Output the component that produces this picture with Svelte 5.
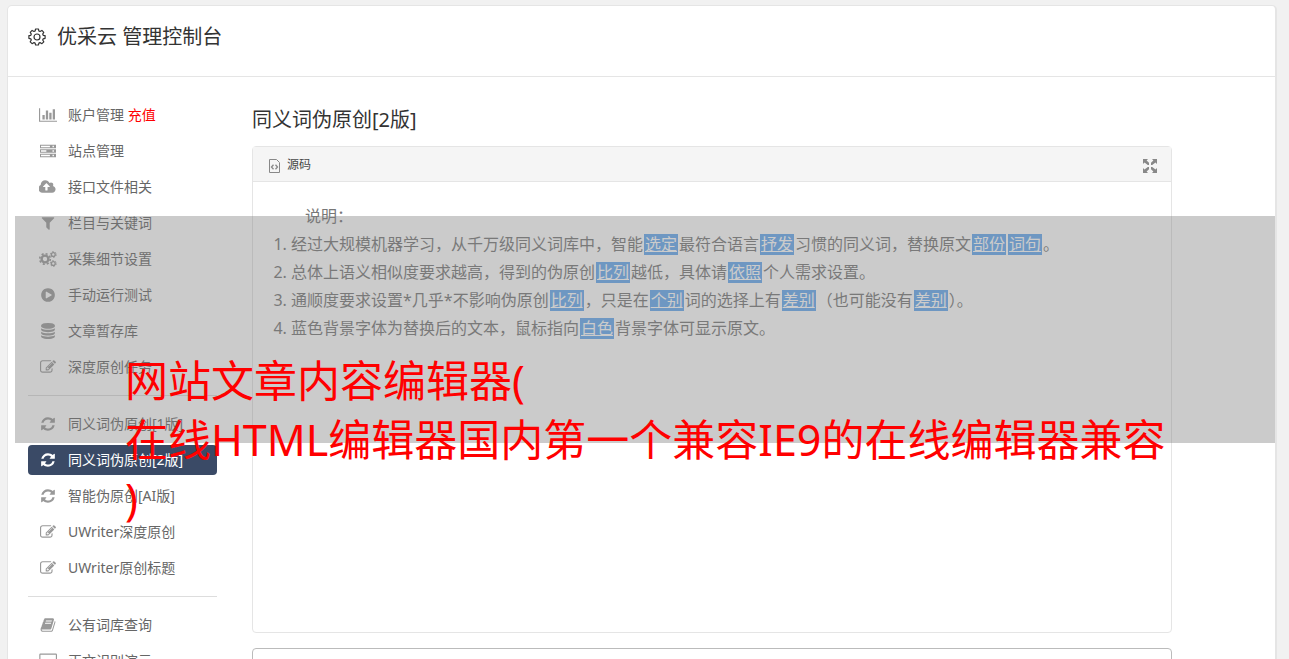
<script>
  const icons = {
    chart: {
      w: 2048,
      d: 'M640 896v512h-256v-512h256zm384-512v1024h-256v-1024h256zm1024 1152v128h-2048v-1536h128v1408h1920zm-640-896v768h-256v-768h256zm384-384v1152h-256v-1152h256z',
    },
    server: {
      w: 1792,
      d: 'M0 192h1792v384h-1792zM112 304v160h1000v-160zM1400 304v160h160v-160zM0 704h1792v384h-1792zM112 816v160h600v-160zM1400 816v160h160v-160zM0 1216h1792v384h-1792zM112 1328v160h1000v-160zM1400 1328v160h160v-160z',
    },
    upload: {
      w: 1920,
      d: 'M1216 864q0-14-9-23l-352-352q-9-9-23-9t-23 9l-351 351q-10 12-10 24 0 14 9 23t23 9h224v352q0 13 9.5 22.5t22.5 9.5h192q13 0 22.5-9.5t9.5-22.5v-352h224q13 0 22.5-9.5t9.5-22.5zm640 288q0 159-112.5 271.5t-271.5 112.5h-1088q-185 0-316.5-131.5t-131.5-316.5q0-130 70-240t188-165q-2-30-2-43 0-212 150-362t362-150q156 0 285.5 87t188.5 231q71-62 166-62 106 0 181 75t75 181q0 76-41 138 130 31 213.5 135.5t83.5 238.5z',
    },
    filter: {
      w: 1792,
      d: 'M1595 295q17 41-14 70l-493 493v742q0 42-39 59-13 5-25 5-27 0-45-19l-256-256q-19-19-19-45v-486l-493-493q-31-29-14-70 17-39 59-39h1280q42 0 59 39z',
    },
    play: {
      w: 1792,
      d: 'M896 128q209 0 385.5 103t279.5 279.5 103 385.5-103 385.5-279.5 279.5-385.5 103-385.5-103-279.5-279.5-103-385.5 103-385.5 279.5-279.5 385.5-103zm384 823q32-18 32-55t-32-55l-544-320q-31-19-64-1-32 19-32 56v640q0 37 32 56 16 8 32 8 17 0 32-9z',
    },
    database: {
      w: 1792,
      d: 'M896 768q237 0 443-43t325-127v170q0 69-103 128t-280 93.5-385 34.5-385-34.5-280-93.5-103-128v-170q119 84 325 127t443 43zm0 768q237 0 443-43t325-127v170q0 69-103 128t-280 93.5-385 34.5-385-34.5-280-93.5-103-128v-170q119 84 325 127t443 43zm0-384q237 0 443-43t325-127v170q0 69-103 128t-280 93.5-385 34.5-385-34.5-280-93.5-103-128v-170q119 84 325 127t443 43zm0-1152q208 0 385 34.5t280 93.5 103 128v128q0 69-103 128t-280 93.5-385 34.5-385-34.5-280-93.5-103-128v-128q0-69 103-128t280-93.5 385-34.5z',
    },
    edit: {
      w: 1792,
      d: 'M888 1184l116-116-152-152-116 116v56h96v96h56zm440-720q-16-16-33 1l-350 350q-17 17-1 33t33-1l350-350q17-17 1-33zm80 594v190q0 119-84.5 203.5t-203.5 84.5h-832q-119 0-203.5-84.5t-84.5-203.5v-832q0-119 84.5-203.5t203.5-84.5h832q63 0 117 25 15 7 18 23 3 17-9 29l-49 49q-14 14-32 8-23-6-45-6h-832q-66 0-113 47t-47 113v832q0 66 47 113t113 47h832q66 0 113-47t47-113v-126q0-13 9-22l64-64q15-15 35-7t20 29zm-96-738l288 288-672 672h-288v-288zm444 132l-92 92-288-288 92-92q28-28 68-28t68 28l152 152q28 28 28 68t-28 68z',
    },
    refresh: {
      w: 1792,
      d: 'M1639 1056q0 5-1 7-64 268-268 434.5t-478 166.5q-146 0-282.5-55t-243.5-157l-129 129q-19 19-45 19t-45-19-19-45v-448q0-26 19-45t45-19h448q26 0 45 19t19 45-19 45l-137 137q71 66 161 102t187 36q134 0 250-65t186-179q11-17 53-117 8-23 30-23h192q13 0 22.5 9.5t9.5 22.5zm25-800v448q0 26-19 45t-45 19h-448q-26 0-45-19t-19-45 19-45l138-138q-148-137-349-137-134 0-250 65t-186 179q-11 17-53 117-8 23-30 23h-199q-13 0-22.5-9.5t-9.5-22.5v-7q65-268 270-434.5t480-166.5q146 0 284 55.5t245 156.5l130-129q19-19 45-19t45 19 19 45z',
    },
    book: {
      w: 1792,
      d: 'M1703 478q40 57 18 129l-275 906q-19 64-76.5 107.5t-122.5 43.5h-923q-77 0-148.5-53.5t-99.5-131.5q-24-67-2-127 0-4 3-27t4-37q1-8-3-21.5t-3-19.5q2-11 8-21t16.5-23.5 16.5-23.5q23-38 45-91.5t30-91.5q3-10 .5-30t-.5-28q3-11 17-28t17-23q21-36 42-92t25-90q1-9-2.5-32t.5-28q4-13 22-30.5t22-22.5q19-26 42.5-84.5t27.5-96.5q1-8-3-25.5t-2-26.5q2-8 9-18t18-23 17-21q8-12 16.5-30.5t15-35 16-36 19.5-32 26.5-23.5 36-11.5 47.5 5.5l-1 3q38-9 51-9h761q74 0 114 56t18 130l-274 906q-36 119-71.5 153.5t-128.5 34.5h-869q-27 0-38 15-11 16-1 43 24 70 144 70h923q29 0 56-15.5t35-41.5l300-987q7-22 5-57 38 15 59 43zm-1064 2q-4 13 2 22.5t20 9.5h608q13 0 25.5-9.5t16.5-22.5l21-64q4-13-2-22.5t-20-9.5h-608q-13 0-25.5 9.5t-16.5 22.5zm-83 256q-4 13 2 22.5t20 9.5h608q13 0 25.5-9.5t16.5-22.5l21-64q4-13-2-22.5t-20-9.5h-608q-13 0-25.5 9.5t-16.5 22.5z',
    },
    screen: {
      w: 2048,
      d: 'M160 64h1728q128 0 128 128v1088q0 128-128 128h-1728q-128 0-128-128v-1088q0-128 128-128zM160 192v1088h1728v-1088zM640 1536h768v128h-768z',
    },
  }

  const groups = [
    [
      { icon: 'chart', text: '账户管理', extra: '充值' },
      { icon: 'server', text: '站点管理' },
      { icon: 'upload', text: '接口文件相关' },
      { icon: 'filter', text: '栏目与关键词' },
      { icon: 'cogs', text: '采集细节设置' },
      { icon: 'play', text: '手动运行测试' },
      { icon: 'database', text: '文章暂存库' },
      { icon: 'edit', text: '深度原创任务' },
    ],
    [
      { icon: 'refresh', text: '同义词伪原创[1版]' },
      { icon: 'refresh', text: '同义词伪原创[2版]', active: true },
      { icon: 'refresh', text: '智能伪原创[AI版]' },
      { icon: 'edit', text: 'UWriter深度原创' },
      { icon: 'edit', text: 'UWriter原创标题' },
    ],
    [
      { icon: 'book', text: '公有词库查询' },
      { icon: 'screen', text: '正文识别演示' },
    ],
  ]

  // words in odd positions are the replaced ones
  const notes = [
    ['经过大规模机器学习，从千万级同义词库中，智能', '选定', '最符合语言', '抒发', '习惯的同义词，替换原文', '部份', '', '词句', '。'],
    ['总体上语义相似度要求越高，得到的伪原创', '比列', '越低，具体请', '依照', '个人需求设置。'],
    ['通顺度要求设置*几乎*不影响伪原创', '比列', '，只是在', '个别', '词的选择上有', '差别', '（也可能没有', '差别', '）。'],
    ['蓝色背景字体为替换后的文本，鼠标指向', '白色', '背景字体可显示原文。'],
  ]
</script>

<div class="page">
  <div class="card">
    <header>
      <svg class="gear" viewBox="0 0 18 18" fill="none" stroke="currentColor">
        <path
          d="M7.6 1h2.8l.5 2 1.1.5 1.9-1.1 1.9 1.9-1.1 1.8.5 1.2 1.9.4v2.6l-1.9.5-.5 1.2 1.1 1.8-1.9 1.9-1.9-1.1-1.1.5-.5 1.9H7.6l-.5-1.9-1.1-.5-1.9 1.1-1.9-1.9 1.1-1.8-.5-1.2-1.9-.5V7.700l1.900-.400.500-1.200-1.100-1.800 1.900-1.900 1.900 1.100 1.100-.500z"
          stroke-width="1.200"
          stroke-linejoin="round"
        />
        <circle cx="9" cy="9" r="3" stroke-width="1.200" />
      </svg>
      <h1>优采云 管理控制台</h1>
    </header>

    <div class="body">
      <nav>
        {#each groups as group, i}
          {#if i > 0}
            <hr />
          {/if}
          {#each group as item}
            <a href="#top" class:active={item.active}>
              <span class="icon">
                {#if item.icon === 'cogs'}
                  <svg viewBox="0 0 18 16" fill="none" stroke="currentColor">
                    <circle cx="6" cy="8" r="3.400" stroke-width="2.400" />
                    <circle cx="6" cy="8" r="5.300" stroke-width="1.600" stroke-dasharray="2.080 2.080" />
                    <circle cx="14.300" cy="3.500" r="1.900" stroke-width="1.300" />
                    <circle cx="14.300" cy="3.500" r="2.900" stroke-width="1" stroke-dasharray="1.520 1.520" />
                    <circle cx="14.300" cy="12.500" r="1.900" stroke-width="1.300" />
                    <circle cx="14.300" cy="12.500" r="2.900" stroke-width="1" stroke-dasharray="1.520 1.520" />
                  </svg>
                {:else}
                  <svg viewBox="0 0 {icons[item.icon].w} 1792" fill="currentColor" fill-rule="evenodd">
                    <path d={icons[item.icon].d} />
                  </svg>
                {/if}
              </span>
              <span>{item.text}{#if item.extra}{' '}<em>{item.extra}</em>{/if}</span>
            </a>
          {/each}
        {/each}
      </nav>

      <main>
        <h2>同义词伪原创[2版]</h2>
        <div class="editor">
          <div class="toolbar">
            <button type="button">
              <svg class="source" viewBox="0 0 11 14" fill="none" stroke="currentColor">
                <path d="M.5.5h7l3 3v10H.5z" stroke-width="1" />
                <path d="M4.500 5.800L2.500 8l2 2.200M6.500 5.800L8.500 8l-2 2.200" stroke-width="1.300" />
              </svg>
              源码
            </button>
            <button type="button" aria-label="最大化">
              <svg class="expand" viewBox="0 0 14 14" fill="currentColor">
                <path d="M0 0h5L3.600 1.400 6 3.800v2.200H4.800L1.500 3.500 0 5zM14 0v5l-1.500-1.500L9.200 6H8V3.800l2.400-2.400L9 0zM0 14V9l1.500 1.500L4.800 8H6v2.200l-2.400 2.400L5 14zM14 14H9l1.400-1.400L8 10.200V8h1.200l3.300 2.500L14 9z" />
              </svg>
            </button>
          </div>
          <div class="content">
            <p>说明：</p>
            <ol>
              {#each notes as parts}
                <li>{#each parts as part, i}{#if i % 2}<mark>{part}</mark>{:else}{part}{/if}{/each}</li>
              {/each}
            </ol>
          </div>
        </div>
        <div class="result"></div>
      </main>
    </div>
  </div>

  <div class="overlay">
    <div class="caption">
      <div>网站文章内容编辑器(</div>
      <div>在线HTML编辑器国内第一个兼容IE9的在线编辑器兼容</div>
      <div>)</div>
    </div>
  </div>
</div>

<style>
  :global(body) {
    background: #f1f1f1;
  }
  .page {
    position: relative;
    box-sizing: border-box;
    height: 100vh;
    padding: 5px 12px 0 7px;
    overflow: hidden;
    color: #333;
    font: 14px/20px 'Noto Sans', 'Noto Sans CJK SC', sans-serif;
  }
  .card {
    box-sizing: border-box;
    min-height: 100%;
    border: 1px solid #e5e5e5;
    border-right-width: 2px;
    border-radius: 5px;
    background: #fff;
  }
  header {
    display: flex;
    align-items: center;
    gap: 11px;
    height: 62px;
    padding: 0 20px 8px;
    border-bottom: 1px solid #e5e5e5;
  }
  h1,
  h2 {
    margin: 0;
    font-size: 20px;
    line-height: 28px;
    font-weight: 400;
  }
  .gear {
    width: 18px;
    height: 18px;
  }
  .body {
    display: flex;
    gap: 35px;
    padding: 23px 103px 0 20px;
  }
  nav {
    display: flex;
    flex: 0 0 189px;
    flex-direction: column;
    gap: 6px;
  }
  nav a {
    display: flex;
    align-items: center;
    gap: 10px;
    height: 30px;
    padding: 0 10px;
    border-radius: 4px;
    color: #666;
    text-decoration: none;
    white-space: nowrap;
  }
  nav a.active {
    background: #3a4a66;
    color: #fff;
  }
  nav em {
    color: #f00;
    font-style: normal;
  }
  nav hr {
    width: 100%;
    height: 1px;
    margin: 7px 0;
    border: 0;
    background: #ddd;
  }
  .icon {
    display: flex;
    justify-content: center;
    width: 20px;
    color: #999;
  }
  .icon svg {
    height: 16px;
  }
  .active .icon {
    color: #fff;
  }
  main {
    flex: 1;
    min-width: 0;
    padding-top: 6px;
  }
  .editor {
    margin-top: 12px;
    border: 1px solid #e5e5e5;
    border-radius: 4px;
  }
  .toolbar {
    display: flex;
    align-items: center;
    justify-content: space-between;
    height: 34px;
    padding: 0 14px;
    border-bottom: 1px solid #e5e5e5;
    background: #f5f5f5;
  }
  .toolbar button {
    display: flex;
    align-items: center;
    gap: 7px;
    padding: 2px 0 0;
    border: 0;
    background: none;
    color: #484848;
    font: inherit;
    font-size: 12px;
  }
  .toolbar svg {
    height: 14px;
    margin: 2px 0 0 2px;
    color: #888;
  }
  .content {
    min-height: 410px;
    padding: 20px;
    color: #777;
    font-size: 16px;
    line-height: 28px;
  }
  .content p {
    margin: 0;
    text-indent: 2em;
  }
  ol {
    margin: 0;
    padding-left: 18px;
  }
  mark {
    display: inline-block;
    margin: 0 1px;
    padding: 0 1px;
    background: #64a8f0;
    color: #fff;
    line-height: 21px;
    text-decoration: underline;
  }
  .result {
    height: 200px;
    margin-top: 15px;
    border: 1px solid #bbb;
    border-radius: 4px;
  }
  .overlay {
    position: absolute;
    top: 216px;
    right: 14px;
    left: 15px;
    height: 227px;
    background: rgba(125, 125, 125, 0.4);
    pointer-events: none;
  }
  .caption {
    padding: 135px 0 0 110px;
    color: #f00;
    font-size: 43px;
    line-height: 59px;
    white-space: nowrap;
  }
</style>
